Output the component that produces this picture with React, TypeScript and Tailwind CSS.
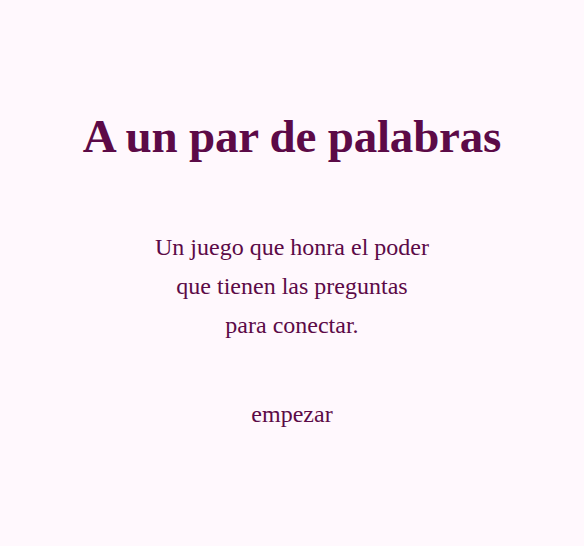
import React from 'react';

const App: React.FC = () => {
  return (
    <div className="min-h-screen w-full bg-[#fff8fd] text-[#5c0a47] font-['Liberation_Serif',serif] flex flex-col items-center">
      <h1 className="mt-[104px] text-[47px] font-bold leading-[64px] tracking-[-0.2px]">A un par de palabras</h1>
      <p className="mt-[60px] text-center text-[24px] leading-[39px]">
        Un juego que honra el poder
        <br />
        que tienen las preguntas
        <br />
        para conectar.
      </p>
      <button className="mt-[53px] text-[24px] leading-[32px]">empezar</button>
    </div>
  );
};

export default App;
